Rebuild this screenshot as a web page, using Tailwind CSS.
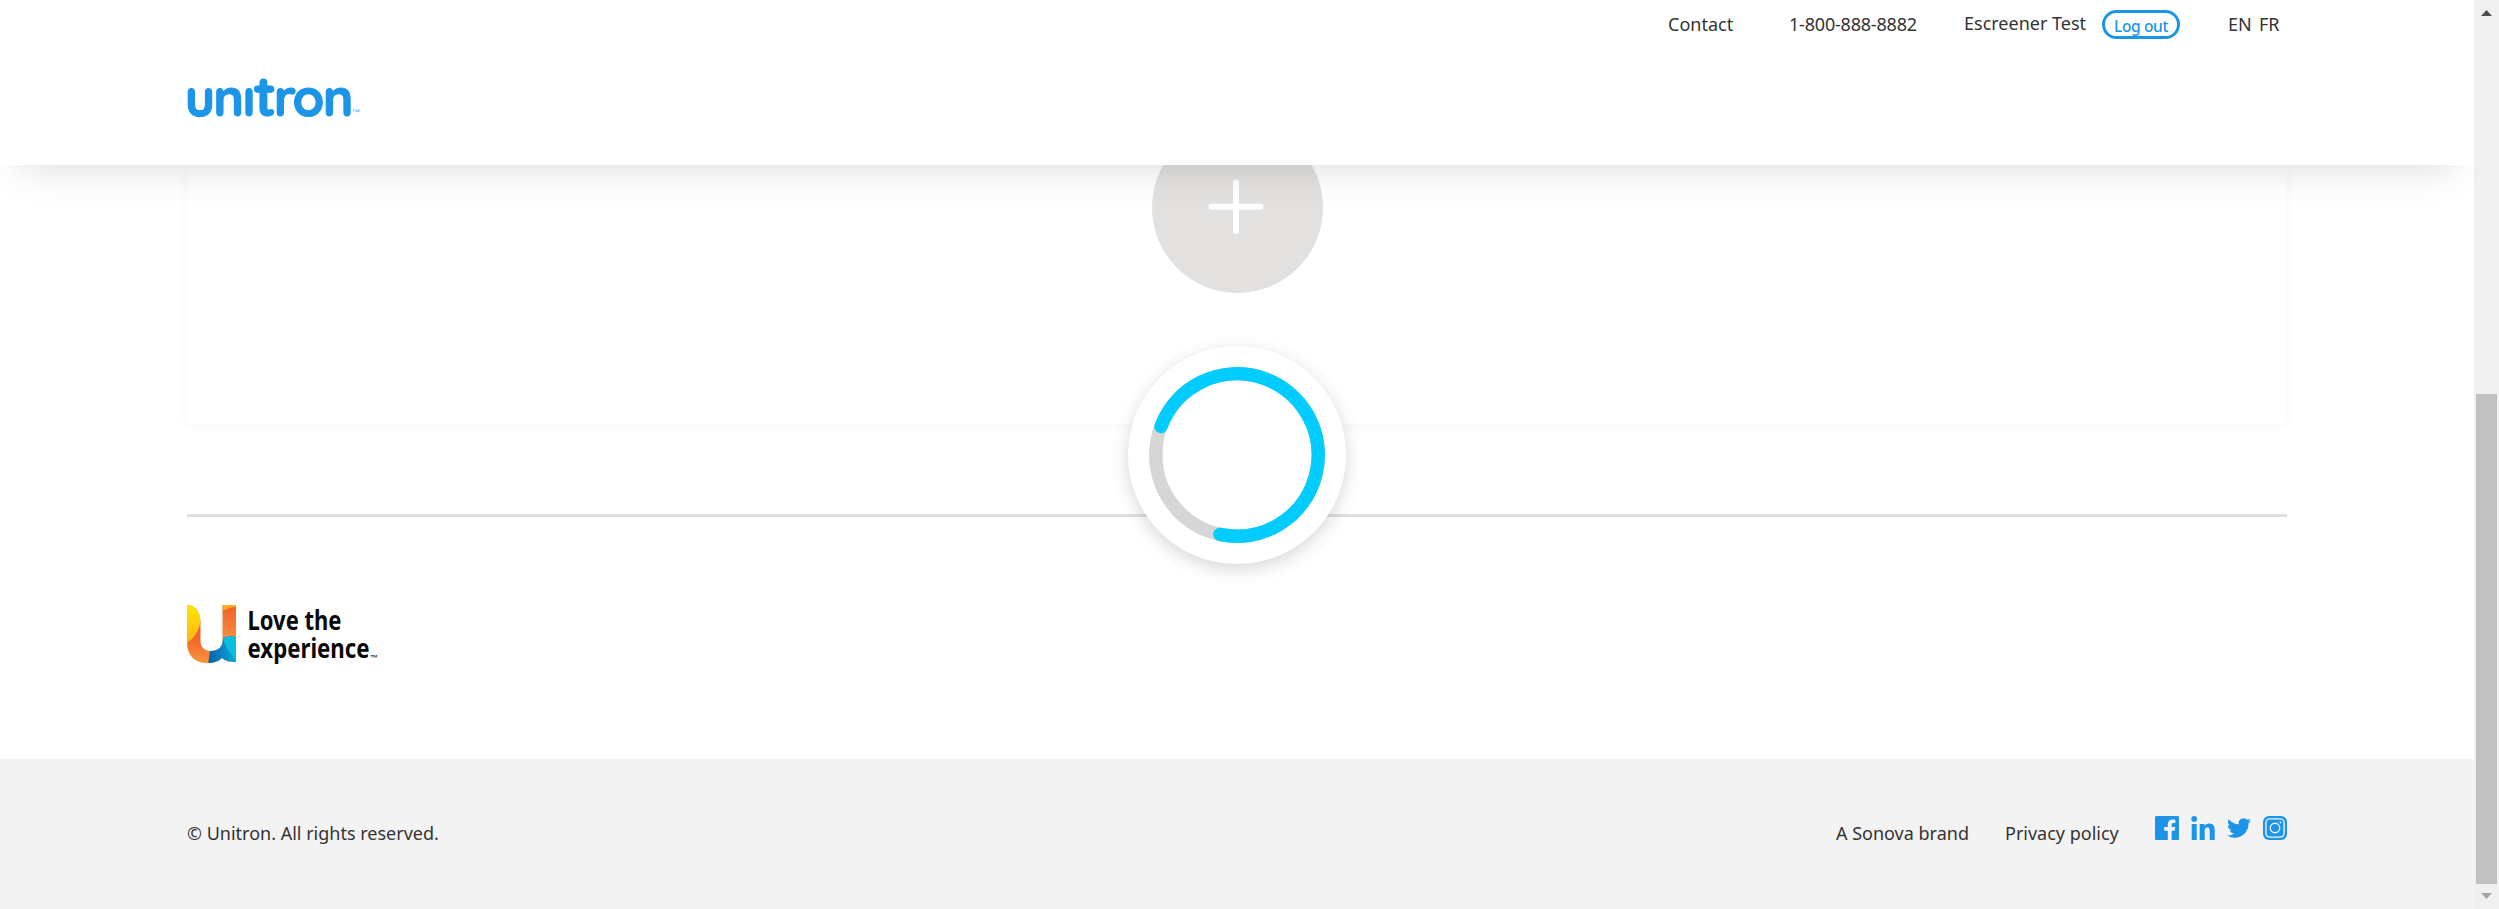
<!DOCTYPE html>
<html lang="en">
<head>
<meta charset="utf-8">
<title>Unitron</title>
<script src="https://cdn.jsdelivr.net/npm/@tailwindcss/browser@4"></script>
</head>
<body class="overflow-hidden bg-white font-['Noto_Sans',sans-serif] text-[18px] leading-6 text-[#333]">
<div class="relative flex h-[909px] w-full">
  <div class="flex min-w-0 flex-1 flex-col">
    <header class="relative z-10 flex h-[165px] shrink-0 flex-col bg-white px-[187px] shadow-[0_20px_40px_-20px_rgba(0,0,0,0.16)]">
      <nav class="flex h-[72px] items-start justify-end pt-3">
        <a class="w-[121px]">Contact</a>
        <a class="w-[175px] tracking-[-0.2px]">1-800-888-8882</a>
        <span class="-mt-px w-[138px]">Escreener Test</span>
        <a class="-mt-0.5 mr-[48px] flex h-[29px] w-[78px] items-center justify-center rounded-full border-3 border-[#1c95e9] pt-0.5 text-[15.5px] font-medium leading-5 tracking-[-0.35px] text-[#1c95e9]">Log out</a>
        <a class="w-[31px]">EN</a>
        <a class="w-[28px]">FR</a>
      </nav>
      <svg class="block overflow-visible" width="180" height="50" viewBox="0 0 180 50" role="img" aria-label="unitron" fill="#1c95e9" stroke="#1c95e9" stroke-width="1.200" font-family="Quicksand, Lato, sans-serif" font-size="51" font-weight="700">
        <text x="-2 26.500 56 66.500 87 105.500 136" y="43.500">unı<tspan font-size="56">t</tspan>ron</text>
        <text x="165" y="43" font-size="8" font-weight="400" stroke="none" textLength="8" lengthAdjust="spacingAndGlyphs">™</text>
      </svg>
    </header>

    <main class="flex flex-1 flex-col px-[187px]">
      <section class="flex h-[259px] shrink-0 justify-center rounded-b-lg bg-white shadow-[0_2px_12px_rgba(0,0,0,0.04)]">
        <svg class="-mt-[43px]" width="171" height="171" viewBox="0 0 171 171">
          <circle cx="85.500" cy="85.500" r="85.500" fill="#e2e1df"/>
          <path d="M84 60.300V109M59.500 84.700H108.500" fill="none" stroke="#fff" stroke-width="6" stroke-linecap="round"/>
        </svg>
      </section>
      <div class="mt-[90px] h-[3px] shrink-0 bg-[#dfdfdf]"></div>
      <svg class="mt-[87px] shrink-0 overflow-visible" width="196" height="64" viewBox="0 -1 196 64">
        <defs>
          <clipPath id="mark"><path d="M0 0C8 0 13.500 7 13.500 17V35C13.500 42 17 46 24 46C31 46 35.700 42 35.700 35V0H49V57C43 57 38 56 35 53C31 57 26 58 20 58C7 58 0 50 0 37Z"/></clipPath>
          <linearGradient id="orange" x1="0" y1="0" x2="0" y2="1"><stop offset="0" stop-color="#ee5a24"/><stop offset=".6" stop-color="#f26a2c"/><stop offset="1" stop-color="#fb9a3e"/></linearGradient>
          <linearGradient id="warm" x1="0" y1="0" x2="0" y2="1"><stop offset="0" stop-color="#f0602a"/><stop offset="1" stop-color="#f98d3c"/></linearGradient>
          <linearGradient id="yellow" x1="0" y1="0" x2="0" y2="1"><stop offset="0" stop-color="#ffe600"/><stop offset="1" stop-color="#fdb515"/></linearGradient>
          <linearGradient id="blue" x1="0" y1="0" x2="1" y2="0"><stop offset="0" stop-color="#0a5fae"/><stop offset=".5" stop-color="#0b84c6"/><stop offset="1" stop-color="#00a9d6"/></linearGradient>
        </defs>
        <g clip-path="url(#mark)">
          <rect width="49" height="60" fill="url(#orange)"/>
          <path d="M35 0H49V34H35Z" fill="url(#warm)"/>
          <path d="M0 0H14V13C13 25 7 33 0 38Z" fill="url(#yellow)"/>
          <path d="M35 0H49V2C44 2 40 4 35 6Z" fill="#fcae17"/>
          <path d="M21 60L23 46C29 45 34 41 36 33C40 31 45 31 49 32V60Z" fill="url(#blue)"/>
          <path d="M36 33C40 31 45 31 49 32V55C43 49 38 42 36 33Z" fill="#0bbddd"/>
        </g>
        <g fill="#090909" font-family="Noto Sans, sans-serif">
          <text x="60.500" y="25" font-size="26.500" font-weight="700" textLength="94" lengthAdjust="spacingAndGlyphs">Love the</text>
          <text x="60.500" y="53" font-size="26.500" font-weight="700" textLength="122" lengthAdjust="spacingAndGlyphs">experience</text>
          <text x="183.500" y="55" font-size="7" textLength="7" lengthAdjust="spacingAndGlyphs">™</text>
        </g>
      </svg>
    </main>

    <footer class="flex h-[150px] shrink-0 items-start justify-between bg-[#f3f3f3] px-[187px]">
      <p class="mt-[62px]">© Unitron. All rights reserved.</p>
      <div class="flex items-start">
        <a class="mt-[62px] w-[169px]">A Sonova brand</a>
        <a class="mt-[62px] w-[150px]">Privacy policy</a>
        <div class="mt-[57px] flex gap-3 text-[#1c95e9]">
          <svg width="24" height="24" viewBox="0 0 24 24" fill="currentColor"><path d="M22.700 0H1.300C.6 0 0 .6 0 1.300v21.400C0 23.400.6 24 1.300 24h11.500v-9.300H9.200v-3.600h3.600V8.400c0-3.100 1.900-4.800 4.700-4.800 1.300 0 2.500.1 2.800.2v3.200h-1.900c-1.500 0-1.800.7-1.800 1.800v2.300h3.600l-.5 3.600h-3.100V24h6.100c.7 0 1.300-.6 1.300-1.300V1.300C24 .6 23.400 0 22.700 0Z"/></svg>
          <svg width="24" height="24" viewBox="0 0 24 24" fill="currentColor"><circle cx="3.200" cy="2.900" r="2.900"/><path d="M.7 8h5v16h-5ZM8.700 8h4.800v2.200c.8-1.500 2.400-2.600 4.900-2.600C22.700 7.600 23.700 10.500 23.700 14.500V24h-5v-8.500c0-2-.1-4-2.400-4-2.300 0-2.600 1.800-2.600 4V24h-5Z"/></svg>
          <svg width="24" height="24" viewBox="0 0 24 24" fill="currentColor"><path d="M23.95 4.57a10 10 0 0 1-2.82.77 4.96 4.96 0 0 0 2.16-2.72c-.95.55-2 .95-3.13 1.18a4.92 4.92 0 0 0-8.38 4.48C7.69 8.09 4.07 6.13 1.64 3.16a4.82 4.82 0 0 0-.67 2.48c0 1.71.87 3.21 2.19 4.1a4.9 4.9 0 0 1-2.23-.62v.06a4.92 4.92 0 0 0 3.95 4.83 5 5 0 0 1-2.21.08 4.94 4.94 0 0 0 4.6 3.42A9.87 9.87 0 0 1 0 19.54a13.99 13.99 0 0 0 7.55 2.21c9.05 0 14-7.5 14-13.98 0-.21 0-.42-.02-.63a9.94 9.94 0 0 0 2.46-2.55Z"/></svg>
          <svg width="24" height="24" viewBox="0 0 24 24"><rect width="24" height="24" rx="6" fill="currentColor"/><g fill="none" stroke="#f3f3f3" stroke-width="1.400"><rect x="2.900" y="2.900" width="18.200" height="18.200" rx="4"/><circle cx="12" cy="12" r="4.700"/></g><circle cx="17.500" cy="6.500" r="1" fill="#f3f3f3"/></svg>
        </div>
      </div>
    </footer>
  </div>

  <aside class="relative z-20 flex w-[25px] shrink-0 flex-col items-center bg-[#f0f0f0]">
    <svg class="mt-2.5" width="11" height="6" viewBox="0 0 11 6"><path d="M0 6L5.500 0L11 6Z" fill="#505050"/></svg>
    <div class="mt-[378px] h-[490px] w-[21px] bg-[#c1c1c1]"></div>
    <svg class="mt-[9px]" width="11" height="6" viewBox="0 0 11 6"><path d="M0 0L5.500 6L11 0Z" fill="#a3a3a3"/></svg>
  </aside>

  <!-- Loading spinner overlay -->
  <div class="absolute left-[1128px] top-[345.5px] z-20 size-[218px] rounded-full bg-white shadow-[0_5px_18px_rgba(0,0,0,0.16)]">
    <svg width="218" height="218" viewBox="-109 -109 218 218" fill="none" stroke-width="13.500">
      <circle r="81.200" stroke="#d6d6d6"/>
      <path d="M-76 -28.500A81.200 81.200 0 1 1 -17 79.400" stroke="#00ccff" stroke-linecap="round"/>
    </svg>
  </div>
</div>
</body>
</html>
